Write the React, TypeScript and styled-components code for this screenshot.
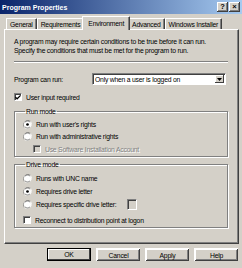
import React from 'react';
import styled, { createGlobalStyle } from 'styled-components';

const GlobalStyle = createGlobalStyle`
  html, body {
    margin: 0;
    padding: 0;
    background: #d4d0c8;
  }
`;

const Window = styled.div`
  width: 242px;
  height: 268px;
  background: #d4d0c8;
  font-family: 'Liberation Sans', Arial, sans-serif;
  font-size: 6.8px;
  letter-spacing: -0.22px;
  color: #000;
  display: flex;
  flex-direction: column;
  overflow: hidden;
`;

const TitleBar = styled.div`
  height: 14px;
  background: linear-gradient(to right, #0a246a, #a6caf0);
  display: flex;
  align-items: center;
  justify-content: space-between;
  padding: 0 2px 0 2px;
`;

const Title = styled.span`
  color: #fff;
  font-weight: bold;
  font-size: 7px;
  letter-spacing: 0;
`;

const CaptionButtons = styled.div`
  display: flex;
  gap: 1px;
`;

const CaptionButton = styled.div`
  width: 11px;
  height: 10px;
  background: #d4d0c8;
  box-shadow: inset -1px -1px 0 #404040, inset 1px 1px 0 #fff, inset -2px -2px 0 #808080;
  display: flex;
  align-items: center;
  justify-content: center;
  font-weight: bold;
  font-size: 7.5px;
  line-height: 1;
  letter-spacing: 0;
`;

const Body = styled.div`
  flex: 1;
  display: flex;
  flex-direction: column;
  padding: 3px 3px 0 4px;
`;

const TabStrip = styled.div`
  display: flex;
  align-items: flex-end;
  height: 12px;
  padding-left: 2px;
  position: relative;
  z-index: 1;
`;

const Tab = styled.div<{ $active?: boolean }>`
  height: ${({ $active }) => ($active ? '14px' : '11px')};
  margin: ${({ $active }) => ($active ? '0 -2px -1px' : '0')};
  padding: 0 ${({ $active }) => ($active ? '5px' : '3px')};
  background: #d4d0c8;
  border-left: 1px solid #fff;
  border-top: 1px solid #fff;
  border-right: 1px solid #404040;
  box-shadow: inset -1px 0 0 #808080;
  border-radius: 1px 1px 0 0;
  display: flex;
  align-items: center;
  white-space: nowrap;
  box-sizing: border-box;
  position: relative;
  z-index: ${({ $active }) => ($active ? 2 : 0)};
`;

const Panel = styled.div`
  height: 215px;
  box-sizing: border-box;
  border-left: 1px solid #fff;
  border-top: 1px solid #fff;
  border-right: 1px solid #404040;
  border-bottom: 1px solid #404040;
  box-shadow: inset -1px -1px 0 #808080;
  padding: 7px 10px 0 9px;
  display: flex;
  flex-direction: column;
`;

const Intro = styled.p`
  margin: 0;
  line-height: 9px;
  white-space: nowrap;
`;

const Separator = styled.div`
  height: 0;
  border-top: 1px solid #808080;
  border-bottom: 1px solid #fff;
  margin: 6px 0 10px 0;
`;

const FieldRow = styled.div`
  display: flex;
  align-items: center;
  height: 12px;
`;

const FieldLabel = styled.span`
  width: 78px;
`;

const Select = styled.div`
  flex: 1;
  height: 12px;
  box-sizing: border-box;
  background: #fff;
  border-left: 1px solid #808080;
  border-top: 1px solid #808080;
  border-right: 1px solid #fff;
  border-bottom: 1px solid #fff;
  box-shadow: inset 1px 1px 0 #404040;
  display: flex;
  align-items: center;
  padding-left: 2px;
  margin-right: 2px;
`;

const SelectText = styled.span`
  flex: 1;
`;

const SelectArrow = styled.div`
  width: 9px;
  height: 8px;
  margin-right: 1px;
  background: #d4d0c8;
  box-shadow: inset -1px -1px 0 #404040, inset 1px 1px 0 #fff;
  display: flex;
  align-items: center;
  justify-content: center;
`;

const OptionRow = styled.div<{ $indent?: number; $mt?: number }>`
  display: flex;
  align-items: center;
  height: 10px;
  padding-left: ${({ $indent }) => $indent ?? 0}px;
  margin-top: ${({ $mt }) => $mt ?? 0}px;
  gap: 4px;
  white-space: nowrap;
`;

const OptionLabel = styled.span<{ $disabled?: boolean }>`
  color: ${({ $disabled }) => ($disabled ? '#808080' : '#000')};
  text-shadow: ${({ $disabled }) => ($disabled ? '1px 1px 0 #fff' : 'none')};
`;

const Box = styled.div<{ $disabled?: boolean }>`
  width: 8px;
  height: 8px;
  box-sizing: border-box;
  background: ${({ $disabled }) => ($disabled ? '#d4d0c8' : '#fff')};
  border-left: 1px solid #808080;
  border-top: 1px solid #808080;
  border-right: 1px solid #fff;
  border-bottom: 1px solid #fff;
  box-shadow: inset 1px 1px 0 #404040;
  display: flex;
  align-items: center;
  justify-content: center;
`;

const Group = styled.fieldset<{ $mt: number; $h: number }>`
  margin: ${({ $mt }) => $mt}px 0 0 0;
  height: ${({ $h }) => $h}px;
  box-sizing: border-box;
  padding: 0 0 0 8px;
  border: 1px solid #808080;
  box-shadow: inset 1px 1px 0 #fff, 1px 1px 0 #fff;
  min-width: 0;
`;

const Legend = styled.legend`
  padding: 0 1px;
  margin-left: 2px;
  line-height: 9px;
`;

const DriveBox = styled.div`
  width: 10px;
  height: 11px;
  box-sizing: border-box;
  margin-left: 7px;
  border-left: 1px solid #808080;
  border-top: 1px solid #808080;
  border-right: 1px solid #fff;
  border-bottom: 1px solid #fff;
  box-shadow: inset 1px 1px 0 #404040;
`;

const ButtonRow = styled.div`
  display: flex;
  justify-content: flex-end;
  gap: 5px;
  margin-top: 4px;
  padding-right: 1px;
`;

const Button = styled.div<{ $default?: boolean }>`
  width: 44px;
  height: 13px;
  box-sizing: border-box;
  background: #d4d0c8;
  border: 1px solid ${({ $default }) => ($default ? '#000' : 'transparent')};
  box-shadow: ${({ $default }) =>
    $default
      ? 'inset -1px -1px 0 #404040, inset 1px 1px 0 #fff'
      : 'inset -1px -1px 0 #404040, inset 1px 1px 0 #fff, inset -2px -2px 0 #808080'};
  ${({ $default }) => (!$default ? 'border: none; border-left: 1px solid #fff; border-top: 1px solid #fff;' : '')}
  display: flex;
  align-items: center;
  justify-content: center;
`;

const Check = () => (
  <svg width="7" height="7" viewBox="0 0 7 7">
    <path d="M0.5 3 L2.5 5 L6.5 1" stroke="#000" strokeWidth="1.4" fill="none" />
  </svg>
);

const Radio = ({ on }: { on?: boolean }) => (
  <svg width="9" height="9" viewBox="0 0 12 12">
    <path d="M10.2 1.8 A6 6 0 0 0 1.8 10.2" stroke="#808080" strokeWidth="1" fill="none" />
    <path d="M1.8 10.2 A6 6 0 0 0 10.2 1.8" stroke="#fff" strokeWidth="1" fill="none" />
    <circle cx="6" cy="6" r="4.6" fill="#fff" stroke="#404040" strokeWidth="0.8" strokeDasharray="7 7" strokeDashoffset="-3.5" />
    {on && <circle cx="6" cy="6" r="1.8" fill="#000" />}
  </svg>
);

const Arrow = () => (
  <svg width="5" height="3" viewBox="0 0 5 3">
    <path d="M0 0 H5 L2.5 3 Z" fill="#000" />
  </svg>
);

export default function App() {
  return (
    <Window>
      <GlobalStyle />
      <TitleBar>
        <Title>Program Properties</Title>
        <CaptionButtons>
          <CaptionButton>?</CaptionButton>
          <CaptionButton>×</CaptionButton>
        </CaptionButtons>
      </TitleBar>
      <Body>
        <TabStrip>
          <Tab>General</Tab>
          <Tab>Requirements</Tab>
          <Tab $active>Environment</Tab>
          <Tab>Advanced</Tab>
          <Tab>Windows Installer</Tab>
        </TabStrip>
        <Panel>
          <Intro>A program may require certain conditions to be true before it can run.</Intro>
          <Intro>Specify the conditions that must be met for the program to run.</Intro>
          <Separator />
          <FieldRow>
            <FieldLabel>Program can run:</FieldLabel>
            <Select>
              <SelectText>Only when a user is logged on</SelectText>
              <SelectArrow>
                <Arrow />
              </SelectArrow>
            </Select>
          </FieldRow>
          <OptionRow $mt={7}>
            <Box>
              <Check />
            </Box>
            <OptionLabel>User input required</OptionLabel>
          </OptionRow>
          <Group $mt={5} $h={50}>
            <Legend>Run mode</Legend>
            <OptionRow $mt={3}>
              <Radio on />
              <OptionLabel>Run with user's rights</OptionLabel>
            </OptionRow>
            <OptionRow $mt={2}>
              <Radio />
              <OptionLabel>Run with administrative rights</OptionLabel>
            </OptionRow>
            <OptionRow $mt={3} $indent={10}>
              <Box $disabled />
              <OptionLabel $disabled>Use Software Installation Account</OptionLabel>
            </OptionRow>
          </Group>
          <Group $mt={3} $h={68}>
            <Legend>Drive mode</Legend>
            <OptionRow $mt={4}>
              <Radio />
              <OptionLabel>Runs with UNC name</OptionLabel>
            </OptionRow>
            <OptionRow $mt={3}>
              <Radio on />
              <OptionLabel>Requires drive letter</OptionLabel>
            </OptionRow>
            <OptionRow $mt={3}>
              <Radio />
              <OptionLabel>Requires specific drive letter:</OptionLabel>
              <DriveBox />
            </OptionRow>
            <OptionRow $mt={6}>
              <Box />
              <OptionLabel>Reconnect to distribution point at logon</OptionLabel>
            </OptionRow>
          </Group>
        </Panel>
        <ButtonRow>
          <Button $default>OK</Button>
          <Button>Cancel</Button>
          <Button>Apply</Button>
          <Button>Help</Button>
        </ButtonRow>
      </Body>
    </Window>
  );
}
